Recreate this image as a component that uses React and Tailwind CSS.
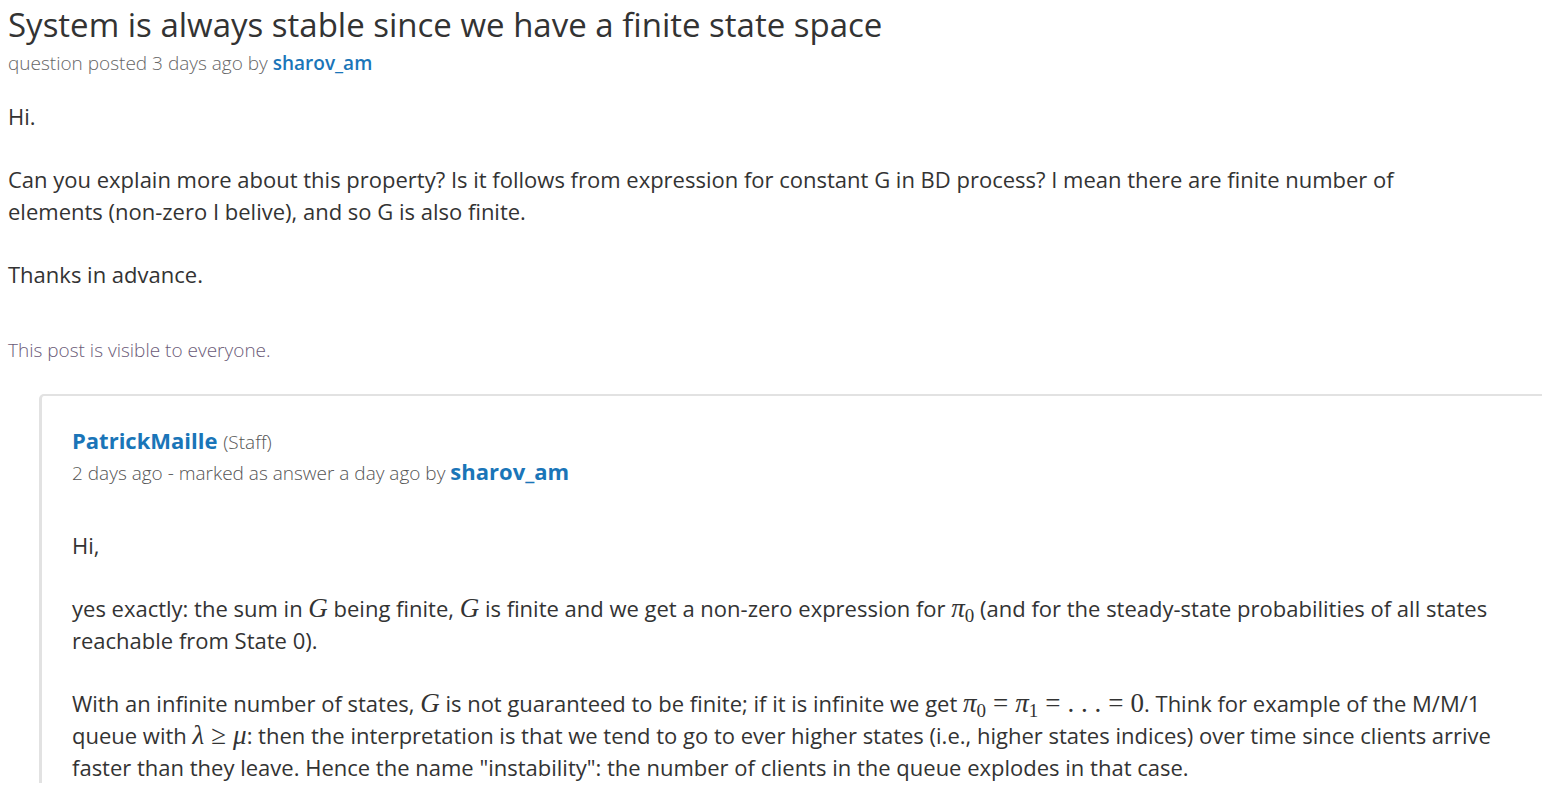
import React from 'react'

const sans = { fontFamily: '"Open Sans", "Noto Sans", sans-serif' }
const serif = { fontFamily: '"Liberation Serif", "DejaVu Serif", serif' }

function M({ children }) {
    return <span className="italic text-[27px] leading-none" style={serif}>{children}</span>
}

function Pi({ sub }) {
    return (
        <span className="text-[27px] leading-none" style={serif}>
            <span className="italic">π</span><span className="text-[19px] relative top-[5px]">{sub}</span>
        </span>
    )
}

// relation sign with math spacing around it
function Rel({ children }) {
    return <span className="text-[27px] leading-none mx-[7px]" style={serif}>{children}</span>
}

function Rm({ children }) {
    return <span className="text-[27px] leading-none" style={serif}>{children}</span>
}

export default function App() {
    return (
        <div className="bg-white min-h-screen text-[#333] overflow-hidden" style={sans}>
            <div className="pl-2">
                <h1 className="text-[33px] leading-[44px] pt-[3px] font-normal text-[#333]">System is always stable since we have a finite state space</h1>
                <p className="text-[19px] leading-[32px] font-light text-[#666]">
                    question posted 3 days ago by <a className="text-[#1a75b8] font-semibold">sharov_am</a>
                </p>

                <div className="mt-[21px] text-[22px] leading-[32px] max-w-[1440px] space-y-[31px]">
                    <p>Hi.</p>
                    <p>Can you explain more about this property? Is it follows from expression for constant G in BD process? I mean there are finite number of elements (non-zero I belive), and so G is also finite.</p>
                    <p>Thanks in advance.</p>
                </div>

                <p className="mt-[44px] text-[19px] leading-[32px] font-light text-[#6b5b78]">This post is visible to everyone.</p>
            </div>

            <div className="ml-[39px] mt-[28px] border-l-[3px] border-t-2 border-[#e2e2e2] rounded-tl-[5px] pl-[30px] pr-[30px] pt-[28px]">
                <div className="text-[22px] leading-[32px]">
                    <span className="font-bold text-[#1a75b8]">PatrickMaille</span>{' '}
                    <span className="text-[19px] font-light text-[#555]">(Staff)</span>
                </div>
                <div className="text-[19px] leading-[26px] font-light text-[#555]">
                    2 days ago - marked as answer a day ago by <span className="text-[22px] font-bold text-[#1a75b8]">sharov_am</span>
                </div>

                <div className="mt-[43px] text-[22px] leading-[32px] space-y-[31px]">
                    <p>Hi,</p>
                    <p>yes exactly: the sum in <M>G</M> being finite, <M>G</M> is finite and we get a non-zero expression for <Pi sub="0" /> (and for the steady-state probabilities of all states reachable from State 0).</p>
                    <p>With an infinite number of states, <M>G</M> is not guaranteed to be finite; if it is infinite we get <Pi sub="0" /><Rel>=</Rel><Pi sub="1" /><Rel>=</Rel><Rm>. . .</Rm><Rel>=</Rel><Rm>0</Rm>. Think for example of the M/M/1 queue with <M>λ</M><Rel>≥</Rel><M>μ</M>: then the interpretation is that we tend to go to ever higher states (i.e., higher states indices) over time since clients arrive faster than they leave. Hence the name "instability": the number of clients in the queue explodes in that case.</p>
                </div>
            </div>
        </div>
    )
}
